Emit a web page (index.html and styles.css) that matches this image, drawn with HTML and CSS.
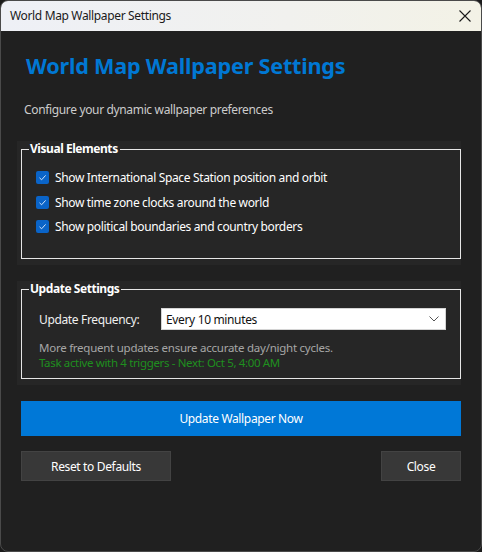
FILE: index.html
```html
<!DOCTYPE html>
<html>
<head>
<meta charset="utf-8">
<link rel="stylesheet" href="styles.css">
</head>
<body>
<div class="window">
  <div class="titlebar">
    <span class="title">World Map Wallpaper Settings</span>
    <svg class="close-x" width="12" height="12" viewBox="0 0 12 12"><path d="M0.5 0.5 L11.5 11.5 M11.5 0.5 L0.5 11.5" stroke="#1a1a1a" stroke-width="1.1" fill="none"/></svg>
  </div>
  <div class="content">
    <h1 class="heading">World Map Wallpaper Settings</h1>
    <p class="subtitle">Configure your dynamic wallpaper preferences</p>

    <div class="group">
      <fieldset class="box">
        <legend class="legend">Visual Elements</legend>
        <div class="box-inner box-visual">
          <label class="check-row"><span class="check"><svg width="9" height="9" viewBox="0 0 9 9"><path d="M1.5 4.8 L3.6 6.8 L7.6 2.4" stroke="#cfe3fb" stroke-width="1" fill="none"/></svg></span>Show International Space Station position and orbit</label>
          <label class="check-row"><span class="check"><svg width="9" height="9" viewBox="0 0 9 9"><path d="M1.5 4.8 L3.6 6.8 L7.6 2.4" stroke="#cfe3fb" stroke-width="1" fill="none"/></svg></span>Show time zone clocks around the world</label>
          <label class="check-row"><span class="check"><svg width="9" height="9" viewBox="0 0 9 9"><path d="M1.5 4.8 L3.6 6.8 L7.6 2.4" stroke="#cfe3fb" stroke-width="1" fill="none"/></svg></span>Show political boundaries and country borders</label>
        </div>
      </fieldset>
    </div>

    <div class="group group-update">
      <fieldset class="box">
        <legend class="legend">Update Settings</legend>
        <div class="box-inner box-update">
          <div class="freq-row">
            <span class="freq-label">Update Frequency:</span>
            <div class="select">
              <span>Every 10 minutes</span>
              <svg width="10" height="6" viewBox="0 0 10 6"><path d="M0.5 0.5 L5 5 L9.5 0.5" stroke="#555" stroke-width="1" fill="none"/></svg>
            </div>
          </div>
          <p class="help">More frequent updates ensure accurate day/night cycles.</p>
          <p class="status">Task active with 4 triggers - Next: Oct 5, 4:00 AM</p>
        </div>
      </fieldset>
    </div>

    <button class="btn-primary">Update Wallpaper Now</button>
    <div class="btn-row">
      <button class="btn btn-reset">Reset to Defaults</button>
      <button class="btn btn-close">Close</button>
    </div>
  </div>
</div>
</body>
</html>
```

FILE: styles.css
```css
* { box-sizing: border-box; }
html, body {
  margin: 0;
  padding: 0;
  background: #1b1b1b;
}
body {
  width: 482px;
  height: 552px;
  overflow: hidden;
  font-family: "Segoe UI", "Noto Sans", "Open Sans", sans-serif;
  font-size: 12px;
  letter-spacing: -0.35px;
}
.window {
  width: 482px;
  height: 552px;
  border: 1px solid #4a4a4a;
  border-radius: 8px;
  overflow: hidden;
  background: #202020;
  display: flex;
  flex-direction: column;
}
.titlebar {
  height: 30px;
  flex: none;
  background: linear-gradient(90deg, #eef0f6 0%, #f1f1ee 60%, #f3f2e6 100%);
  display: flex;
  align-items: center;
  justify-content: space-between;
  padding: 0 10px 0 9px;
}
.title {
  color: #1a1a1a;
  font-size: 12px;
  line-height: 16px;
}
.close-x { display: block; }
.content {
  padding: 0 20px 0 20px;
  display: flex;
  flex-direction: column;
}
.heading {
  margin: 21px 0 0 5px;
  font-size: 21.6px;
  line-height: 28px;
  font-weight: 700;
  letter-spacing: -0.2px;
  color: #0078d4;
}
.subtitle {
  margin: 22px 0 0 3px;
  color: #cccccc;
  font-size: 12px;
  line-height: 16px;
}
.group {
  margin: 23px 0 0 -4px;
  padding: 0 0 6px 4px;
  background: #262626;
}
.group-update { margin-top: 16px; }
.box {
  margin: 0;
  border: 1px solid #e6e6e6;
  padding: 0;
  min-width: 0;
}
.legend {
  margin-left: 7px;
  padding: 0 2px 0 1px;
  color: #ffffff;
  font-weight: 700;
  font-size: 12px;
  letter-spacing: -0.45px;
  line-height: 16px;
}
.box-visual { padding: 8px 0 19px 14px; }
.check-row {
  display: flex;
  align-items: center;
  height: 24.7px;
  color: #ffffff;
  font-size: 12px;
}
.check {
  width: 13px;
  height: 13px;
  border-radius: 2px;
  background: #0a64c8;
  margin-right: 6px;
  flex: none;
  display: flex;
  align-items: center;
  justify-content: center;
}
.check svg { display: block; }
.box-update { padding: 11px 14px 8px 17px; }
.freq-row {
  display: flex;
  align-items: center;
  height: 22px;
}
.freq-label {
  width: 122px;
  color: #f0f0f0;
  font-size: 12px;
}
.select {
  flex: 1;
  height: 22px;
  background: #ffffff;
  border: 1px solid #d4d4d4;
  display: flex;
  align-items: center;
  justify-content: space-between;
  padding: 0 6px 0 4px;
  color: #111111;
  font-size: 12px;
}
.select svg { display: block; }
.help {
  margin: 10px 0 0 0;
  color: #a6a6a6;
  font-size: 11.5px;
  letter-spacing: -0.25px;
  line-height: 15px;
}
.status {
  margin: 0;
  color: #1f8f1f;
  font-size: 11.5px;
  line-height: 15px;
}
.btn-primary {
  margin-top: 16px;
  height: 35px;
  border: none;
  background: #0078d7;
  color: #ffffff;
  font-family: inherit;
  font-size: 12px;
  letter-spacing: -0.35px;
}
.btn-row {
  margin-top: 15px;
  display: flex;
  justify-content: space-between;
}
.btn {
  height: 30px;
  background: #383838;
  border: 1px solid #434343;
  color: #ffffff;
  font-family: inherit;
  font-size: 12px;
  letter-spacing: -0.35px;
}
.btn-reset { width: 150px; }
.btn-close { width: 80px; }
```
